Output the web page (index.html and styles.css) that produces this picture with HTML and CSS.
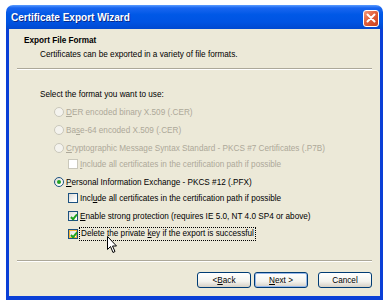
FILE: index.html
```html
<!DOCTYPE html>
<html lang="en">
<head>
    <meta charset="UTF-8">
    <title>Certificate Export Wizard</title>
    <link rel="stylesheet" href="styles.css">
</head>
<body>
<div class="window">
    <div class="titlebar">
        <span class="title">Certificate Export Wizard</span>
        <span class="close-btn">
            <svg width="10" height="10" viewBox="0 0 10 10"><path d="M1.5 1.5 L8.5 8.5 M8.5 1.5 L1.5 8.5" stroke="#fff" stroke-width="2" stroke-linecap="round"/></svg>
        </span>
    </div>
    <div class="frame">
        <div class="header">
            <div class="header-title">Export File Format</div>
            <div class="header-sub">Certificates can be exported in a variety of file formats.</div>
        </div>
        <div class="sep"></div>

        <div class="page">
            <div class="row prompt">Select the format you want to use:</div>

            <div class="row option disabled"><span class="radio"></span><span><u>D</u>ER encoded binary X.509 (.CER)</span></div>
            <div class="row option disabled"><span class="radio"></span><span>Ba<u>s</u>e-64 encoded X.509 (.CER)</span></div>
            <div class="row option disabled"><span class="radio"></span><span><u>C</u>ryptographic Message Syntax Standard - PKCS #7 Certificates (.P7B)</span></div>
            <div class="row sub disabled tight"><span class="check"></span><span><u>I</u>nclude all certificates in the certification path if possible</span></div>

            <div class="row option"><span class="radio on"></span><span><u>P</u>ersonal Information Exchange - PKCS #12 (.PFX)</span></div>
            <div class="row sub tight"><span class="check"></span><span>Incl<u>u</u>de all certificates in the certification path if possible</span></div>
            <div class="row sub"><span class="check on"></span><span><u>E</u>nable strong protection (requires IE 5.0, NT 4.0 SP4 or above)</span></div>
            <div class="row sub"><span class="check on hover"></span><span class="focus">Delete the private <u>k</u>ey if the export is successful</span></div>
        </div>

        <div class="sep bottom-sep"></div>
        <div class="buttons">
            <span class="btn">&lt; <u>B</u>ack</span>
            <span class="btn default"><u>N</u>ext &gt;</span>
            <span class="btn cancel">Cancel</span>
        </div>
    </div>
    <svg class="cursor" width="11" height="18" viewBox="0 0 11 18">
        <path d="M0.5 0.5 L0.5 13.5 L3.5 10.5 L6 16.5 L8 15.5 L5.5 10 L9.5 10 Z" fill="#fff" stroke="#000" stroke-width="1" stroke-linejoin="round"/>
    </svg>
</div>
</body>
</html>
```

FILE: styles.css
```css
body {
    margin: 0;
    background: #fff;
    font-family: "Liberation Sans", Arial, sans-serif;
    font-size: 8.2px;
    color: #000;
}

.window {
    position: relative;
    margin: 5px 0 0 6px;
    width: 377px;
}

.titlebar {
    height: 24px;
    display: flex;
    align-items: center;
    justify-content: space-between;
    padding: 0 4px 0 5px;
    border-radius: 7px 7px 0 0;
    background: linear-gradient(to bottom, #5a9cff 0%, #1a66f0 12%, #0058e6 40%, #0054e3 70%, #0049d0 100%);
}

.title {
    color: #fff;
    font-weight: bold;
    font-size: 10px;
    text-shadow: 1px 1px 0 #0a2a8a;
    margin-top: 1px;
}

.close-btn {
    width: 16px;
    height: 17px;
    box-sizing: border-box;
    border: 1px solid #fff;
    border-radius: 3px;
    background: linear-gradient(135deg, #f29a7c 0%, #e2603b 45%, #c8401d 100%);
    display: flex;
    align-items: center;
    justify-content: center;
    margin-top: 2px;
}

.frame {
    background: #ece9d8;
    border: 3px solid #0a3fd6;
    border-top: 0;
    border-bottom-width: 4px;
    height: 267px;
}

.header {
    padding: 5px 0 0 15px;
    height: 34px;
}

.header-title {
    font-weight: bold;
    line-height: 13px;
}

.header-sub {
    line-height: 13px;
    margin-top: 1px;
    padding-left: 16px;
}

.sep {
    margin: 0 8px;
    height: 1px;
    background: #aca899;
    border-bottom: 1px solid #fff;
}

.page {
    padding: 15px 0 0 31px;
    height: 175px;
}

.row {
    height: 18px;
    display: flex;
    align-items: center;
    white-space: nowrap;
}

.row.tight {
    height: 16px;
    margin-top: -1px;
    margin-bottom: 1px;
}

.option {
    padding-left: 14px;
}

.sub {
    padding-left: 28px;
}

.disabled {
    color: #aca899;
}

.radio {
    width: 10px;
    height: 10px;
    box-sizing: border-box;
    border: 1px solid #1c5180;
    border-radius: 50%;
    background: linear-gradient(135deg, #dcdad5 0%, #fff 80%);
    margin-right: 2px;
    position: relative;
}

.disabled .radio {
    border-color: #cac8bb;
    background: #f4f3ee;
}

.radio.on::after {
    content: "";
    position: absolute;
    left: 2px;
    top: 2px;
    width: 4px;
    height: 4px;
    border-radius: 50%;
    background: #21a121;
}

.check {
    width: 10px;
    height: 10px;
    box-sizing: border-box;
    border: 1px solid #1c5180;
    background: linear-gradient(135deg, #dcdad5 0%, #fff 80%);
    margin-right: 2px;
    position: relative;
}

.disabled .check {
    border-color: #cac8bb;
    background: #fff;
}

.check.on::after {
    content: "";
    position: absolute;
    left: 2.5px;
    top: 0.5px;
    width: 2px;
    height: 5px;
    border: solid #21a121;
    border-width: 0 2px 2px 0;
    transform: rotate(40deg);
}

.check.hover {
    box-shadow: inset 0 0 0 1px #f8b636;
}

.focus {
    outline: 1px dotted #000;
    padding: 0 1px;
    line-height: 12px;
}

.bottom-sep {
    margin-top: 0;
}

.buttons {
    display: flex;
    justify-content: flex-end;
    gap: 3px;
    padding: 10px 8px 0 0;
}

.btn {
    width: 54px;
    height: 16px;
    box-sizing: border-box;
    border: 1px solid #003c74;
    border-radius: 3px;
    background: linear-gradient(to bottom, #fff 0%, #f4f3ee 60%, #d6d0c5 100%);
    display: flex;
    align-items: center;
    justify-content: center;
}

.btn.default {
    box-shadow: inset 0 0 0 1px #98b8ea;
}

.btn.cancel {
    margin-left: 7px;
}

.cursor {
    position: absolute;
    left: 101px;
    top: 231px;
}
```
